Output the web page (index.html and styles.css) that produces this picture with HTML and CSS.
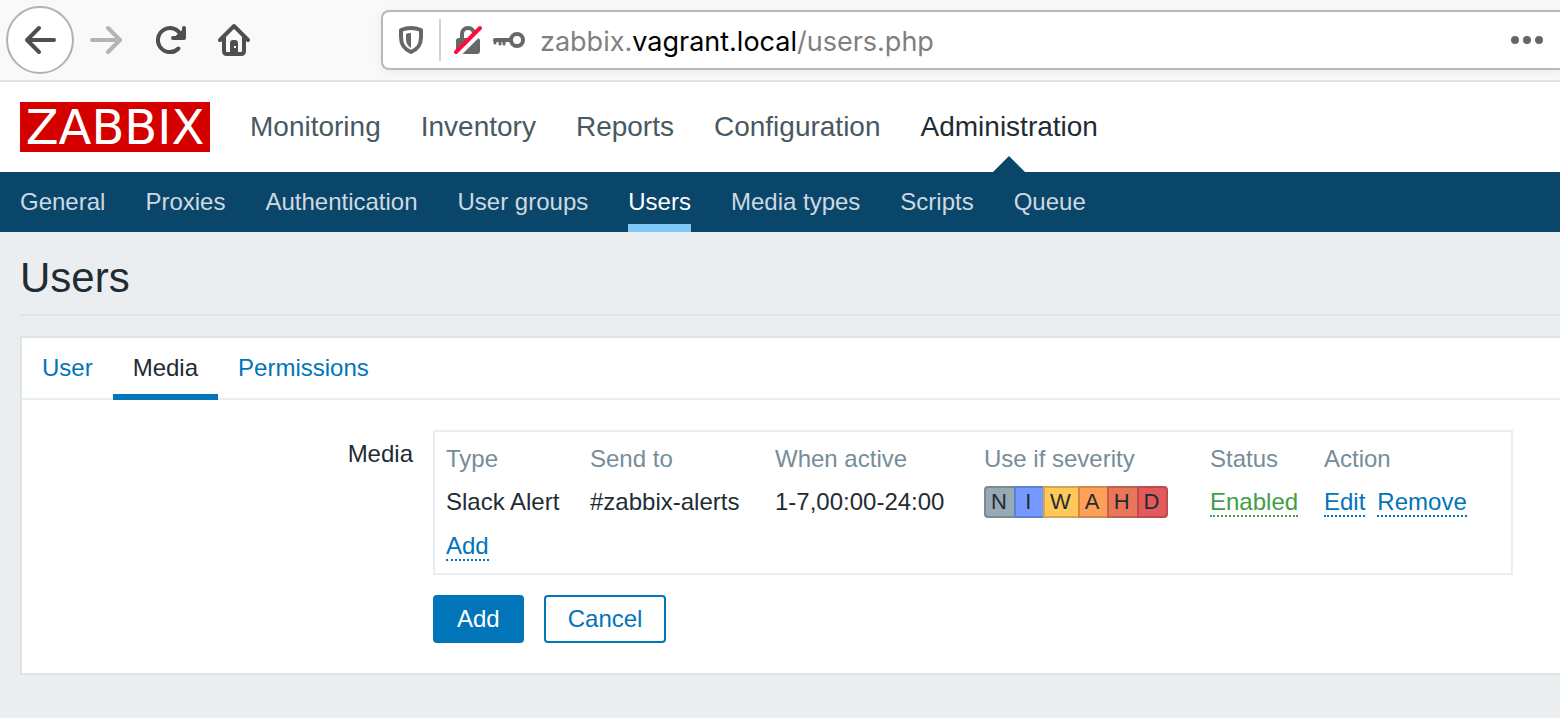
FILE: index.html
```html
<!DOCTYPE html>
<html lang="en">
<head>
<meta charset="utf-8">
<title>Zabbix: Users</title>
<link rel="stylesheet" href="styles.css">
</head>
<body>
<div class="browser-bar">
  <button class="tool back" type="button" aria-label="Back">
    <svg width="34" height="34" viewBox="0 0 34 34" fill="none" stroke="#4f4f4f" stroke-width="4" stroke-linecap="round" stroke-linejoin="round"><path d="M31 17H4M16 5L4 17l12 12"/></svg>
  </button>
  <button class="tool" type="button" aria-label="Forward" disabled>
    <svg width="34" height="34" viewBox="0 0 34 34" fill="none" stroke="#b3b3b3" stroke-width="4" stroke-linecap="round" stroke-linejoin="round"><path d="M3 17h27M19 5l12 12-12 12"/></svg>
  </button>
  <button class="tool" type="button" aria-label="Reload">
    <svg width="34" height="34" viewBox="0 0 34 34"><path d="M25.500 25.500A12 12 0 1 1 27 10.500" fill="none" stroke="#4f4f4f" stroke-width="4" stroke-linecap="round"/><path d="M31 5V15H20" fill="none" stroke="#4f4f4f" stroke-width="4" stroke-linecap="round" stroke-linejoin="round"/><path d="M31 5v10H20l6-5z" fill="#4f4f4f"/></svg>
  </button>
  <button class="tool" type="button" aria-label="Home">
    <svg width="34" height="34" viewBox="0 0 34 34" fill="none" stroke="#4f4f4f" stroke-width="4" stroke-linecap="round" stroke-linejoin="round"><path d="M3 17L17 3l14 14"/><path d="M7 14v14q0 3 3 3h14q3 0 3-3V14"/><path d="M13 30V20q0-3 3-3h2q3 0 3 3v10z" fill="#4f4f4f" stroke="none"/><path d="M17 23h2v2h-2z" fill="#fff" stroke="none"/></svg>
  </button>
  <div class="address">
    <svg width="26" height="30" viewBox="0 0 26 30"><path d="M13 3Q8 3 3 5v7c0 8 3 12 10 15 7-3 10-7 10-15V5Q18 3 13 3z" fill="none" stroke="#676767" stroke-width="4" stroke-linejoin="round"/><path d="M13 8q-3 0-5 1v4c0 5 1 7 5 10z" fill="#676767"/></svg>
    <span class="divider"></span>
    <svg class="lock" width="30" height="32" viewBox="0 0 30 32"><path d="M9 15V10a6 6 0 0 1 12 0v5" fill="none" stroke="#676767" stroke-width="4"/><rect x="3" y="14" width="24" height="16" rx="3" fill="#676767"/><path d="M3 33L31 5" stroke="#fff" stroke-width="5"/><path d="M3 28L27 4" stroke="#ff0a41" stroke-width="4" stroke-linecap="round"/></svg>
    <svg width="34" height="20" viewBox="0 0 34 20" fill="none" stroke="#676767" stroke-linecap="round" stroke-linejoin="round"><circle cx="26" cy="10" r="6" stroke-width="4"/><path d="M4 10h15" stroke-width="4"/><path d="M4 10v3M9 10v4M13 10v4" stroke-width="3"/></svg>
    <div class="url">zabbix.<span>vagrant.local</span>/users.php</div>
    <button class="more" type="button" aria-label="Page actions">
      <svg width="32" height="8" viewBox="0 0 32 8" fill="#676767"><circle cx="4" cy="4" r="4"/><circle cx="16" cy="4" r="4"/><circle cx="28" cy="4" r="4"/></svg>
    </button>
  </div>
</div>

<header class="top">
  <a class="logo" href="#">ZABBIX</a>
  <nav class="main-nav">
    <a href="#">Monitoring</a>
    <a href="#">Inventory</a>
    <a href="#">Reports</a>
    <a href="#">Configuration</a>
    <a class="current" href="#">Administration</a>
  </nav>
</header>
<nav class="sub-nav">
  <a href="#">General</a>
  <a href="#">Proxies</a>
  <a href="#">Authentication</a>
  <a href="#">User groups</a>
  <a class="current" href="#">Users</a>
  <a href="#">Media types</a>
  <a href="#">Scripts</a>
  <a href="#">Queue</a>
</nav>

<main class="content">
  <h1>Users</h1>
  <form class="panel">
    <div class="tabs">
      <a href="#">User</a>
      <a class="current" href="#">Media</a>
      <a href="#">Permissions</a>
    </div>
    <div class="fields">
      <div class="label" id="media-label">Media</div>
      <div class="media-box">
        <table aria-labelledby="media-label">
          <colgroup><col class="c-type"><col class="c-send"><col class="c-when"><col class="c-severity"><col class="c-status"><col></colgroup>
          <thead>
            <tr><th>Type</th><th>Send to</th><th>When active</th><th>Use if severity</th><th>Status</th><th>Action</th></tr>
          </thead>
          <tbody>
            <tr>
              <td>Slack Alert</td>
              <td>#zabbix-alerts</td>
              <td>1-7,00:00-24:00</td>
              <td><div class="severity"><span class="n">N</span><span class="i">I</span><span class="w">W</span><span class="a">A</span><span class="h">H</span><span class="d">D</span></div></td>
              <td><a class="link enabled" href="#">Enabled</a></td>
              <td class="actions"><a class="link" href="#">Edit</a><a class="link" href="#">Remove</a></td>
            </tr>
            <tr class="add-row"><td colspan="6"><a class="link" href="#">Add</a></td></tr>
          </tbody>
        </table>
      </div>
      <div class="buttons">
        <button class="btn primary" type="button">Add</button>
        <button class="btn" type="button">Cancel</button>
      </div>
    </div>
  </form>
</main>
</body>
</html>
```
FILE: styles.css
```css
* { box-sizing: border-box; }

body {
  margin: 0;
  background: #ebeef0;
  color: #1f2c33;
  font: 24px/28px "Liberation Sans", Arial, sans-serif;
  overflow-x: hidden;
}

a { color: #0275b8; text-decoration: none; }
button { font: inherit; cursor: pointer; }
svg { display: block; flex: none; }

/* Browser toolbar */
.browser-bar {
  display: flex;
  align-items: center;
  height: 82px;
  padding-left: 6px;
  background: #f9f9fa;
  border-bottom: 2px solid #e1e1e1;
}
.tool {
  display: flex;
  align-items: center;
  justify-content: center;
  flex: none;
  width: 64px;
  height: 64px;
  padding: 0;
  border: 0;
  background: none;
}
.tool.back {
  width: 68px;
  height: 68px;
  border: 2px solid #b1b1b1;
  border-radius: 50%;
  background: #fff;
}
.address {
  display: flex;
  align-items: center;
  flex: 1;
  height: 60px;
  margin-left: 115px;
  padding: 0 17px 0 15px;
  border: 2px solid #b9b9b9;
  border-right: 0;
  border-radius: 8px 0 0 8px;
  background: #fff;
  box-shadow: 0 2px 8px rgba(0, 0, 0, 0.06);
}
.divider {
  width: 2px;
  height: 42px;
  margin: 0 12px 0 15px;
  background: #d2d2d2;
}
.lock { margin-right: 8px; }
.url {
  flex: 1;
  margin-left: 15px;
  padding-top: 4px;
  color: #808080;
  font: 27px/34px Inter, sans-serif;
}
.url span { color: #000; }
.more { padding: 0; border: 0; background: none; }

/* Site navigation */
.top {
  display: flex;
  align-items: center;
  gap: 40px;
  height: 90px;
  padding: 0 20px;
  background: #fff;
}
.logo {
  width: 190px;
  background: #d40000;
  color: #fff;
  font: 48px/50px "DejaVu Sans", sans-serif;
  text-align: center;
}
.main-nav { display: flex; gap: 40px; font-size: 28px; line-height: 90px; }
.main-nav a { position: relative; color: #4a5861; }
.main-nav .current { color: #1f2c33; }
.main-nav .current::after {
  content: "";
  position: absolute;
  bottom: 0;
  left: calc(50% - 16px);
  border: 16px solid transparent;
  border-top: 0;
  border-bottom-color: #0a466a;
}
.sub-nav {
  display: flex;
  gap: 40px;
  padding: 0 20px;
  background: #0a466a;
  line-height: 60px;
}
.sub-nav a { color: #ced9e1; }
.sub-nav .current { color: #fff; box-shadow: inset 0 -8px #80c8f7; }

/* Page content */
.content { padding-left: 20px; }
h1 {
  margin: 0 0 20px;
  padding: 22px 0 12px;
  border-bottom: 2px solid #dfe4e7;
  font-size: 42px;
  font-weight: 400;
  line-height: 48px;
}
.panel {
  padding-bottom: 30px;
  border: 2px solid #dfe4e7;
  border-right: 0;
  background: #fff;
}
.tabs { display: flex; border-bottom: 2px solid #ebeef0; }
.tabs a { padding: 0 20px; line-height: 60px; }
.tabs .current {
  margin-bottom: -2px;
  color: #1f2c33;
  box-shadow: inset 0 -6px #0275b8;
}
.fields {
  display: grid;
  grid-template-columns: 391px minmax(0, 1080px);
  gap: 20px;
  padding: 30px 20px 0 0;
}
.label { padding-top: 10px; text-align: right; }
.media-box { padding: 5px 0; border: 2px solid #ebeef0; }
table { width: 100%; border-collapse: collapse; table-layout: fixed; }
th, td { height: 43px; padding: 0 0 0 11px; text-align: left; white-space: nowrap; }
th { color: #768d99; font-weight: 400; }
.add-row td { height: 45px; }
.c-type { width: 144px; }
.c-send { width: 185px; }
.c-when { width: 209px; }
.c-severity { width: 226px; }
.c-status { width: 114px; }
.link { border-bottom: 2px dotted; }
.enabled { color: #429e47; }
.actions .link + .link { margin-left: 12px; }

.severity { display: flex; width: max-content; font-size: 22px; line-height: 28px; text-align: center; }
.severity span { min-width: 29px; padding: 0 7px 0 5px; border: 2px solid; border-right-width: 0; }
.severity .n { background: #97aab3; border-color: #798a93; border-radius: 4px 0 0 4px; }
.severity .i { background: #7499ff; border-color: #5e7fd6; }
.severity .w { background: #ffc859; border-color: #d2a64d; }
.severity .a { background: #ffa059; border-color: #d2864d; }
.severity .h { background: #e97659; border-color: #c0634d; }
.severity .d { background: #e45959; border-color: #bc4d4d; border-right-width: 2px; border-radius: 0 4px 4px 0; }

.buttons { grid-column: 2; display: flex; gap: 20px; }
.btn {
  height: 48px;
  padding: 0 22px;
  border: 2px solid #0275b8;
  border-radius: 4px;
  background: #fff;
  color: #0275b8;
}
.btn.primary { background: #0275b8; color: #fff; }
```
